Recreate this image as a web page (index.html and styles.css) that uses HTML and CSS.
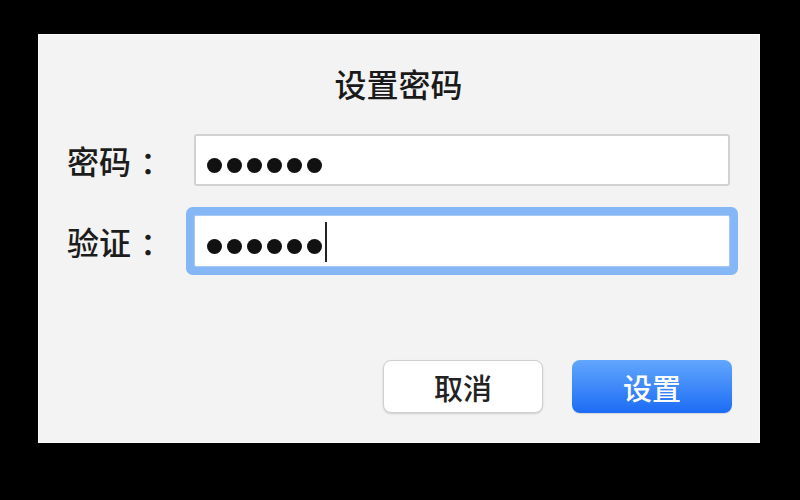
FILE: index.html
```
<!DOCTYPE html>
<html lang="zh-CN">
<head>
<meta charset="utf-8">
<title>设置密码</title>
<link rel="stylesheet" href="styles.css">
</head>
<body>
<div class="dialog">
  <div class="title">设置密码</div>
  <div class="row">
    <div class="label">密码<span class="colon">：</span></div>
    <div class="field">
      <span class="dot"></span><span class="dot"></span><span class="dot"></span><span class="dot"></span><span class="dot"></span><span class="dot"></span>
    </div>
  </div>
  <div class="row row-second">
    <div class="label">验证<span class="colon">：</span></div>
    <div class="field field-focus">
      <span class="dot"></span><span class="dot"></span><span class="dot"></span><span class="dot"></span><span class="dot"></span><span class="dot"></span><span class="caret"></span>
    </div>
  </div>
  <div class="spacer"></div>
  <div class="actions">
    <div class="btn btn-cancel">取消</div>
    <div class="btn btn-primary">设置</div>
  </div>
</div>
</body>
</html>
```
FILE: styles.css
```
html, body {
  margin: 0;
  padding: 0;
  background: #000;
}
body {
  width: 800px;
  height: 500px;
  overflow: hidden;
  font-family: "Noto Sans CJK SC", "Noto Sans", sans-serif;
}
.dialog {
  margin-left: 38px;
  margin-top: 34px;
  width: 722px;
  height: 409px;
  box-sizing: border-box;
  background: #f3f3f3;
  border: 1px solid #fafafa;
  padding: 26px 29px 29px 28px;
  display: flex;
  flex-direction: column;
}
.title {
  text-align: center;
  font-size: 32px;
  font-weight: 500;
  line-height: 44px;
  color: #1a1a1a;
  margin-bottom: 29px;
}
.row {
  display: flex;
  align-items: center;
}
.row-second {
  margin-top: 29px;
}
.label {
  width: 127px;
  font-size: 32px;
  font-weight: 500;
  line-height: 52px;
  color: #1c1c1c;
  white-space: nowrap;
}
.colon {
  margin-left: 9px;
}
.field {
  flex: 1;
  height: 52px;
  box-sizing: border-box;
  background: #fff;
  border: 2px solid #d2d2d2;
  border-radius: 3px;
  display: flex;
  align-items: center;
  gap: 5px;
  padding: 10px 0 0 11px;
}
.field-focus {
  border: 1px solid #a9c9f4;
  padding-left: 12px;
  box-shadow: 0 0 0 8px #85b7f7;
  border-radius: 2px;
}
.dot {
  width: 15px;
  height: 15px;
  border-radius: 50%;
  background: #111;
}
.caret {
  width: 2px;
  height: 40px;
  background: #222;
  margin-left: -2px;
  margin-top: -8px;
}
.spacer {
  flex: 1;
}
.actions {
  display: flex;
  justify-content: flex-end;
  gap: 29px;
  margin-right: -2px;
}
.btn {
  width: 160px;
  height: 53px;
  box-sizing: border-box;
  border-radius: 8px;
  display: flex;
  align-items: center;
  justify-content: center;
  font-size: 29px;
  font-weight: 500;
}
.btn-cancel {
  background: #fff;
  border: 1px solid #cfcfcf;
  box-shadow: 0 1px 2px rgba(0,0,0,0.15);
  color: #222;
}
.btn-primary {
  background: linear-gradient(#62a6fd, #1c6cf5);
  color: #fff;
  box-shadow: 0 1px 1px rgba(0,0,0,0.12);
}
```
